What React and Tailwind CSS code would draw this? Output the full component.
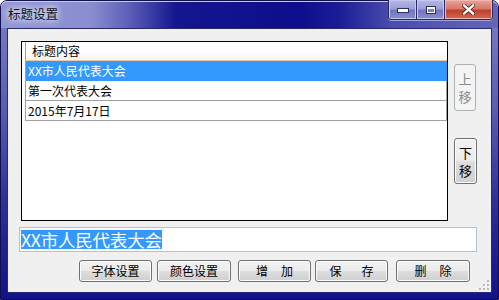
import React from "react";

const font = "font-['Noto_Sans_CJK_SC','Noto_Sans_CJK_SC',sans-serif]";

function WinButton({ children, className = "" }) {
  return (
    <div
      className={`h-[22px] flex items-center justify-center rounded-[3px] border border-[#707070] bg-[linear-gradient(to_bottom,#f2f2f2_0%,#ebebeb_48%,#dddddd_52%,#cfcfcf_100%)] shadow-[inset_0_0_0_1px_#fcfcfc] text-[12px] leading-none text-black whitespace-pre ${className}`}
    >
      {children}
    </div>
  );
}

export default function App() {
  return (
    <div className={`w-[499px] h-[300px] relative overflow-hidden ${font}`}>
      <div className="w-[499px] h-[300px] flex flex-col rounded-t-[7px] border border-[#10104a] bg-[linear-gradient(to_bottom,#7c80c8_0%,#5a5eb4_35%,#2a2c98_70%,#12128a_100%)]">
        {/* Title bar */}
        <div className="relative h-[27px] shrink-0 flex items-start rounded-t-[6px] bg-[linear-gradient(to_right,#9296d4_0px,#8a8ed0_90px,#5a5cb6_130px,#14168f_175px,#0e0e8c_300px,#1c1e96_340px,#4a4cac_390px,#6466b8_499px)] shadow-[inset_0_1px_0_#c8caf0]">
          <div className="ml-[7px] mt-[6px] text-[12.5px] leading-[14px] text-[#101010] [text-shadow:0_0_6px_#ffffff,0_0_10px_#e0e4ff]">
            标题设置
          </div>
          {/* caption buttons */}
          <div className="absolute left-[387px] top-[-1px] flex h-[20px] rounded-b-[4px] border border-[#2a2a5a] border-t-0 overflow-hidden shadow-[0_1px_0_#a0a4e0]">
            <div className="w-[28px] h-full flex items-end justify-center pb-[6px] border-r border-[#2a2a6a] bg-[linear-gradient(to_bottom,#b4b8e4_0%,#9ca0d8_45%,#7076c0_55%,#8a90cc_100%)] shadow-[inset_0_0_0_1px_#c4c8ee]">
              <div className="w-[10px] h-[3px] bg-white border border-[#303060] box-content"></div>
            </div>
            <div className="w-[28px] h-full flex items-center justify-center border-r border-[#2a2a6a] bg-[linear-gradient(to_bottom,#b4b8e4_0%,#9ca0d8_45%,#7076c0_55%,#8a90cc_100%)] shadow-[inset_0_0_0_1px_#c4c8ee]">
              <div className="w-[10px] h-[8px] border border-[#303060] bg-white flex items-center justify-center">
                <div className="w-[6px] h-[3px] mt-[1px] bg-[#7a80c4]"></div>
              </div>
            </div>
            <div className="w-[47px] h-full flex items-center justify-center bg-[linear-gradient(to_bottom,#e8a49a_0%,#d8786a_45%,#c0402e_55%,#d06a50_100%)] shadow-[inset_0_0_0_1px_#f0b8b0]">
              <svg width="13" height="11" viewBox="0 0 13 11">
                <path d="M2 1.5 L11 9.5 M11 1.5 L2 9.5" stroke="#5a1a10" strokeWidth="4" strokeLinecap="square" />
                <path d="M2 1.5 L11 9.5 M11 1.5 L2 9.5" stroke="#ffffff" strokeWidth="2.4" strokeLinecap="square" />
              </svg>
            </div>
          </div>
        </div>

        {/* Client area */}
        <div className="relative mx-[6px] mb-[6px] flex-1 flex flex-col bg-[#f0f0f0] border border-[#2a2a70]">
          <div className="flex mt-[12px]">
            {/* List */}
            <div className="ml-[13px] w-[427px] h-[180px] border border-[#000000] bg-white pl-[3px] flex flex-col">
              <div className="h-[19px] border-l border-[#a0a0a0] border-b border-b-[#f0c8a0] bg-[linear-gradient(to_bottom,#ffffff_0%,#ffffff_50%,#f4f4f6_100%)] flex items-center pl-[6px] text-[12px] text-black leading-none">
                标题内容
              </div>
              <div className="h-[20px] bg-[#3399ff] border-l border-[#a0a0a0] flex items-center pl-[2px] text-[12px] text-white leading-none">
                XX市人民代表大会
              </div>
              <div className="h-[20px] border-l border-r border-b border-[#a0a0a0] flex items-center pl-[2px] text-[12px] text-black leading-none">
                第一次代表大会
              </div>
              <div className="h-[20px] border-l border-r border-b border-[#a0a0a0] flex items-center pl-[2px] text-[12px] text-black leading-none">
                2015年7月17日
              </div>
            </div>
            {/* Up / down */}
            <div className="ml-[6px] flex flex-col">
              <div className="mt-[23px] w-[22px] h-[47px] rounded-[3px] border border-[#adb2b5] bg-[#f4f4f4] flex flex-col items-center justify-center gap-[5px] text-[13px] leading-none text-[#8a8a8a]">
                <span>上</span>
                <span>移</span>
              </div>
              <div className="mt-[27px] w-[23px] h-[46px] rounded-[3px] border border-[#707070] bg-[linear-gradient(to_bottom,#f2f2f2_0%,#ebebeb_48%,#dddddd_52%,#cfcfcf_100%)] shadow-[inset_0_0_0_1px_#fcfcfc] flex flex-col items-center justify-center gap-[5px] text-[13px] leading-none text-black">
                <span>下</span>
                <span>移</span>
              </div>
            </div>
          </div>

          {/* Text box */}
          <div className="ml-[11px] mt-[6px] w-[458px] h-[25px] border border-[#abc4dc] bg-white flex items-center pl-[1px]">
            <span className="bg-[#3399ff] text-white text-[17.5px] leading-[19px] h-[19px] tracking-[-0.2px]">
              XX市人民代表大会
            </span>
          </div>

          {/* Buttons */}
          <div className="flex mt-[8px]">
            <WinButton className="ml-[71px] w-[73px]">字体设置</WinButton>
            <WinButton className="ml-[5px] w-[74px]">颜色设置</WinButton>
            <WinButton className="ml-[7px] w-[73px] gap-[13px]">
              <span>增</span>
              <span>加</span>
            </WinButton>
            <WinButton className="ml-[4px] w-[73px] gap-[20px]">
              <span>保</span>
              <span>存</span>
            </WinButton>
            <WinButton className="ml-[8px] w-[74px] gap-[13px]">
              <span>删</span>
              <span>除</span>
            </WinButton>
          </div>

          {/* size grip */}
          <svg className="absolute right-[2px] bottom-[2px]" width="10" height="10" viewBox="0 0 10 10">
            {[[8, 0], [8, 4], [4, 4], [8, 8], [4, 8], [0, 8]].map(([x, y], i) => (
              <g key={i}>
                <rect x={x + 1} y={y + 1} width="2" height="2" fill="#ffffff" />
                <rect x={x} y={y} width="2" height="2" fill="#b8b8b8" />
              </g>
            ))}
          </svg>
        </div>
      </div>
    </div>
  );
}
